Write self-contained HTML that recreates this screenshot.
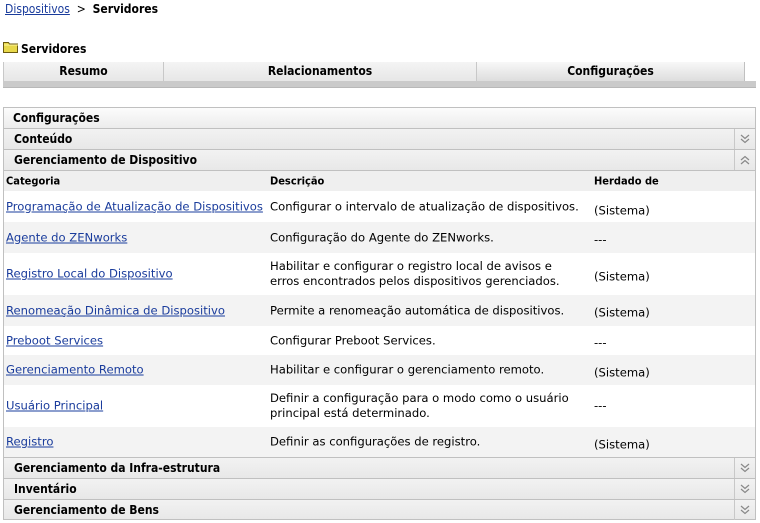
<!DOCTYPE html>
<html><head><meta charset="utf-8"><style>
*{margin:0;padding:0;box-sizing:border-box}
body{width:760px;height:523px;background:#fff;font-family:"DejaVu Sans Condensed","DejaVu Sans","Liberation Sans",sans-serif;font-size:12px;color:#000;position:relative;overflow:hidden}
.a{position:absolute;white-space:nowrap}
a{color:#1a3c9c;text-decoration:underline}
b{font-weight:bold}
.tab{position:absolute;top:62px;height:20px;background:linear-gradient(#f4f4f4,#e6e6e6);border-left:1px solid #c8c8c8;text-align:center;font-weight:bold;line-height:19px}
.sec{position:absolute;left:3px;width:753px;height:21px;background:linear-gradient(#f2f2f2,#e8e8e8);border:1px solid #c0c0c0;border-bottom:none;font-weight:bold;line-height:20px;padding-left:10px}
.ic{position:absolute;right:0;top:0;width:21px;height:20px;border-left:1px solid #c8c8c8}
.ic svg{position:absolute;left:5px;top:5px}
.row{position:absolute;left:3px;width:753px;border-left:1px solid #c0c0c0;border-right:1px solid #c0c0c0;font-family:"DejaVu Sans",sans-serif;font-size:11.6px}
.row .c{position:absolute;top:50%;transform:translateY(-50%);line-height:15px}
.hd{font-family:"DejaVu Sans Condensed","DejaVu Sans",sans-serif;font-size:11px}
</style></head><body>
<div class="a" style="left:5px;top:2px"><a href="#">Dispositivos</a> &nbsp;&gt;&nbsp; <b>Servidores</b></div>
<svg class="a" style="left:3px;top:41px" width="16" height="12"><path d="M0.5 1.5h5l1 1.5h8v8.5h-14z" fill="#e8d84a" stroke="#6b5a10"/><path d="M1 4h14" stroke="#fff7a0"/></svg>
<div class="a" style="left:21px;top:42px;font-weight:bold">Servidores</div>
<div class="tab" style="left:3px;width:160px;border-left:1px solid #c8c8c8">Resumo</div>
<div class="tab" style="left:163px;width:313px">Relacionamentos</div>
<div class="tab" style="left:476px;width:269px;background:linear-gradient(#f8f8f8,#dcdcdc);border-right:1px solid #c0c0c0">Configurações</div>
<div class="a" style="left:3px;top:81px;width:753px;height:7px;background:#cacaca;border-bottom:1px solid #b8b8b8"></div>
<div class="sec" style="top:107px;background:linear-gradient(#fcfcfc,#ececec);padding-left:9px">Configurações</div>
<div class="sec" style="top:128px">Conteúdo<div class="ic"><svg width="10" height="10"><path d="M1 1l4 3.5 4-3.5M1 5l4 3.5 4-3.5" fill="none" stroke="#888" stroke-width="1.2"/></svg></div></div>
<div class="sec" style="top:149px">Gerenciamento de Dispositivo<div class="ic"><svg width="10" height="10"><path d="M1 5l4-3.5 4 3.5M1 9l4-3.5 4 3.5" fill="none" stroke="#888" stroke-width="1.2"/></svg></div></div>
<div class="row hd" style="top:170px;height:21px;background:#efefef;border-top:1px solid #c0c0c0;font-weight:bold;font-family:'DejaVu Sans Condensed','DejaVu Sans',sans-serif;font-size:11px">
<span class="c" style="left:2px">Categoria</span><span class="c" style="left:266px">Descrição</span><span class="c" style="left:590px">Herdado de</span></div>
<div class="row" style="top:191px;height:31px;background:#fff"><span class="c" style="left:2px"><a href="#">Programação de Atualização de Dispositivos</a></span><span class="c" style="left:266px">Configurar o intervalo de atualização de dispositivos.</span><span class="c" style="left:590px;top:20px">(Sistema)</span></div>
<div class="row" style="top:222px;height:31px;background:#f3f3f3"><span class="c" style="left:2px"><a href="#">Agente do ZENworks</a></span><span class="c" style="left:266px">Configuração do Agente do ZENworks.</span><span class="c" style="left:590px;top:18px">---</span></div>
<div class="row" style="top:253px;height:42px;background:#fff"><span class="c" style="left:2px"><a href="#">Registro Local do Dispositivo</a></span><span class="c" style="left:266px">Habilitar e configurar o registro local de avisos e<br>erros encontrados pelos dispositivos gerenciados.</span><span class="c" style="left:590px;top:24px">(Sistema)</span></div>
<div class="row" style="top:295px;height:31px;background:#f3f3f3"><span class="c" style="left:2px"><a href="#">Renomeação Dinâmica de Dispositivo</a></span><span class="c" style="left:266px">Permite a renomeação automática de dispositivos.</span><span class="c" style="left:590px;top:18px">(Sistema)</span></div>
<div class="row" style="top:326px;height:29px;background:#fff"><span class="c" style="left:2px"><a href="#">Preboot Services</a></span><span class="c" style="left:266px">Configurar Preboot Services.</span><span class="c" style="left:590px;top:17px">---</span></div>
<div class="row" style="top:355px;height:30px;background:#f3f3f3"><span class="c" style="left:2px"><a href="#">Gerenciamento Remoto</a></span><span class="c" style="left:266px">Habilitar e configurar o gerenciamento remoto.</span><span class="c" style="left:590px;top:18px">(Sistema)</span></div>
<div class="row" style="top:385px;height:42px;background:#fff"><span class="c" style="left:2px"><a href="#">Usuário Principal</a></span><span class="c" style="left:266px">Definir a configuração para o modo como o usuário<br>principal está determinado.</span><span class="c" style="left:590px">---</span></div>
<div class="row" style="top:427px;height:30px;background:#f3f3f3"><span class="c" style="left:2px"><a href="#">Registro</a></span><span class="c" style="left:266px">Definir as configurações de registro.</span><span class="c" style="left:590px;top:18px">(Sistema)</span></div>
<div class="sec" style="top:457px">Gerenciamento da Infra-estrutura<div class="ic"><svg width="10" height="10"><path d="M1 1l4 3.5 4-3.5M1 5l4 3.5 4-3.5" fill="none" stroke="#888" stroke-width="1.2"/></svg></div></div>
<div class="sec" style="top:478px">Inventário<div class="ic"><svg width="10" height="10"><path d="M1 1l4 3.5 4-3.5M1 5l4 3.5 4-3.5" fill="none" stroke="#888" stroke-width="1.2"/></svg></div></div>
<div class="sec" style="top:499px;border-bottom:1px solid #c0c0c0">Gerenciamento de Bens<div class="ic"><svg width="10" height="10"><path d="M1 1l4 3.5 4-3.5M1 5l4 3.5 4-3.5" fill="none" stroke="#888" stroke-width="1.2"/></svg></div></div>
</body></html>
